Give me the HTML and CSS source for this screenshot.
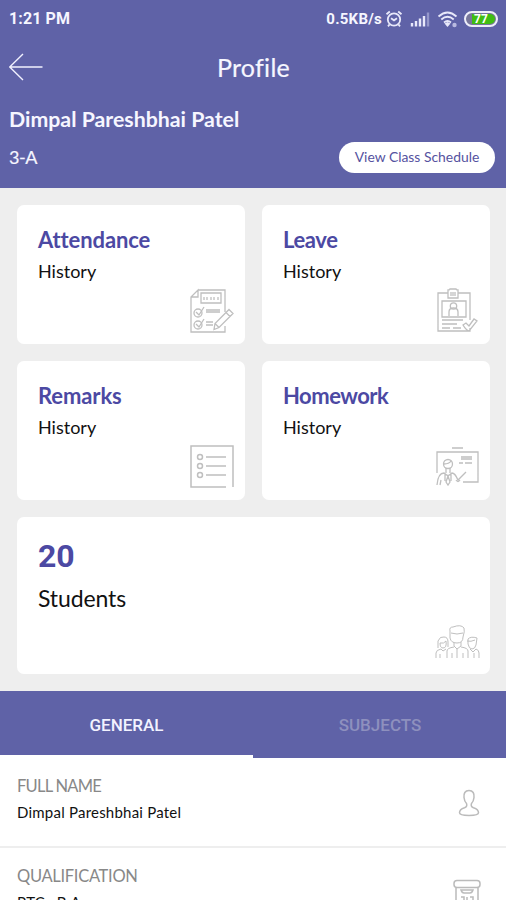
FILE: index.html
```html
<!DOCTYPE html>
<html lang="en">
<head>
<meta charset="utf-8">
<title>Profile</title>
<link rel="stylesheet" href="styles.css">
</head>
<body>
<div class="screen">
  <header class="header">
    <div class="status">
      <span class="time">1:21 PM</span>
      <span class="speed">0.5KB/s</span>
      <svg class="alarm" width="18" height="18" viewBox="0 0 18 18"><circle cx="9" cy="9.5" r="6.2"/><path d="M1.5 4.3 4.8 1.5M13.2 1.5l3.3 2.8M6 8.3l3 2 3-2M4.5 14.5 3 16.3M13.5 14.5l1.5 1.8"/></svg>
      <svg class="signal" width="20" height="15" viewBox="0 0 20 15"><path d="M2 11v3.5M6 9v5.5M10 6.5v8M14 4v10.5"/><path class="faint" d="M18 .5v14"/></svg>
      <svg class="wifi" width="22" height="17" viewBox="0 0 22 17"><path d="M1.5 5.5Q10.500-2.500 19.500 5.500M4.300 8.500Q10.500 3 16.700 8.500M7 11.500Q10.500 8.500 14 11.500"/><path class="solid" d="m7.500 12.500 3-1.500 3 1.500-3 3.500z"/><circle class="solid dot" cx="17.500" cy="14" r="2.200"/></svg>
      <span class="battery"><span class="charge">77</span></span>
    </div>
    <div class="titlebar">
      <svg class="back" width="36" height="30" viewBox="0 0 36 30"><path d="M33.500 15H.7M14 2 .7 15 14 28"/></svg>
      <h1 class="title">Profile</h1>
    </div>
    <div class="teacher">Dimpal Pareshbhai Patel</div>
    <div class="class-row"><span class="class-name">3-A</span><a class="schedule"><span>View Class Schedule</span></a></div>
  </header>

  <main class="cards">
    <section class="card">
      <h2 class="attendance">Attendance</h2><p>History</p>
      <svg class="icon" width="46" height="46" viewBox="0 0 46 46"><path d="M9 2h27v22M36 38v6H2V9l7-7v7H2M12 5h20v10H12zM15 9v3M18 9v3M22 9v3M25 9v3M29 9v3M17 22h14M17 24h14M17 34h7M17 37h7M40 21.500l4 4-14 14-5 2 1-6zM37 24.500l4 4M26 35.500l4 4M7 24l3 3 5-8M7 36l3 3 5-8"/><circle cx="9" cy="25" r="4"/><circle cx="9" cy="37" r="4"/></svg>
    </section>
    <section class="card">
      <h2 class="leave">Leave</h2><p>History</p>
      <svg class="icon" width="46" height="46" viewBox="0 0 46 46"><path d="M14 5H4v38h32v-3M24 5h12v27M14 2q2 0 2-1h6q0 1 2 1v8H14zM8 13h24v16H8zM15 28v-4q0-4 4.500-4t4.500 4v4M8 32h21M8 36h15M8 40h8M19 40h8M29 37l3-2 3 3 5-7 3 2-8 10q-3-1-6-6z"/><circle cx="19.500" cy="18" r="3.200"/><path d="M17 4v4M19 4v4M21 4v4"/></svg>
    </section>
    <section class="card">
      <h2 class="remarks">Remarks</h2><p>History</p>
      <svg class="icon list" width="46" height="46" viewBox="0 0 46 46"><path d="M37 43H2V2h42v41M17 13h20M17 22h20M17 31h20"/><circle cx="11" cy="13" r="2.500"/><circle cx="11" cy="22" r="2.500"/><circle cx="11" cy="31" r="2.500"/></svg>
    </section>
    <section class="card">
      <h2 class="homework">Homework</h2><p>History</p>
      <svg class="icon" width="46" height="46" viewBox="0 0 46 46"><path d="M18 4h11M3 29V8h41v30H29M27 13h11M27 15h11M25 19h4M31 19h7M3 41q1-12 7-12l4 3 4-3q3 0 6 7l8-8M7 36l-1 5M22 36q2 3 4 0M14 32l-2 6 2 3 2-3zM11 30v7M17 30v7"/><circle cx="14" cy="20" r="4.500"/><path d="M10 20q5 0 7-3M12 24v5M16 24v5"/></svg>
    </section>
    <section class="card wide">
      <h2>20</h2><p>Students</p>
      <svg class="icon" width="46" height="36" viewBox="0 0 46 36"><path d="M16 14V7q-1-4 3-4 8-3 11 1 1 3-1 9 0 6-6 6-6 0-7-5zM17 9q6 2 12 0M20 18v4l3 3 4-3v-4M13 34v-7q0-3 7-4M27 23q7 1 7 4v7M18 29v5M29 29v5M23 25v9M4 24v-7q2-5 6-4 4 0 4 5v5M6 19q4 1 6-2 1 7-3 7-3 0-3-5zM2 34v-5q0-3 5-4l2 2 3-2M6 30v4M34 20v-5q3-3 9-1l-1 7q-1 4-4 4t-4-5M33 17q4 1 8-1M36 25l3 3 3-3q3 1 3 4v5M40 29v5"/></svg>
    </section>
  </main>

  <nav class="tabs"><a class="tab active"><span>GENERAL</span></a><a class="tab"><span>SUBJECTS</span></a></nav>

  <div class="details">
    <div class="row">
      <div><div class="label">FULL NAME</div><div class="value">Dimpal Pareshbhai Patel</div></div>
      <svg class="person" width="22" height="28" viewBox="0 0 22 28"><path d="M11 1.500c-4 0-5.500 3-5 7 .3 3 1 4.500 2.500 6 .8 2 0 3.500-2 4.300-3 1-5 2.200-5 5 0 2.200 3 2.700 9.500 2.700s9.500-.5 9.500-2.700c0-2.800-2-4-5-5-2-.8-2.800-2.300-2-4.300C15 13 15.700 11.500 16 8.500c.5-4-1-7-5-7z"/></svg>
    </div>
    <div class="row">
      <div><div class="label qualification">QUALIFICATION</div><div class="value">PTC , B.A</div></div>
      <svg class="box" width="28" height="34" viewBox="0 0 28 34"><path d="M4 1.500h20q3 0 3 3v1q0 3-3 3H4q-3 0-3-3v-1q0-3 3-3zM3 8.500V32h22V8.500M8 11q1 3 3 3h6q2 0 3-3zM8 18h3v3M14 18v4M17 18h3v3M8 23h12"/></svg>
    </div>
  </div>
</div>
</body>
</html>
```

FILE: styles.css
```css
* { box-sizing: border-box; }
body { margin: 0; background: #fff; font-family: Lato, sans-serif; }
h1, h2, p { margin: 0; font-weight: 400; }
svg { display: block; fill: none; flex: none; }
.screen { width: 506px; height: 900px; overflow: hidden; }
.header { height: 188px; padding: 0 11px 0 9px; background: #5f62a7; color: #f6f6ff; }
.status { height: 38px; display: flex; align-items: center; }
.time, .speed { font: 700 16px/20px Roboto, sans-serif; }
.time { margin-right: auto; letter-spacing: .1px; }
.speed { font-size: 15px; letter-spacing: .25px; margin-right: 3px; }
.alarm, .wifi { stroke: #e8e8fa; stroke-width: 1.8; }
.alarm { margin-right: 7px; }
.signal { stroke: #e8e8fa; stroke-width: 2.4; margin-right: 7px; }
.signal .faint { stroke: #9597ca; }
.wifi { margin-right: 5px; }
.wifi .solid { fill: #e8e8fa; stroke: none; }
.wifi .dot { fill: #b9baE0; }
.battery { width: 34px; height: 16px; margin-right: -3px; border: 2px solid #eeeefa; border-radius: 8px; padding: 1px; background: #77769b; display: flex; justify-content: flex-end; }
.charge { width: 23px; height: 10px; border-radius: 0 5px 5px 0; background: #40bd13; color: #fff; font: 700 12px/10px Roboto, sans-serif; padding-left: 2px; }
.titlebar { height: 60px; display: grid; grid-template-columns: 36px 1fr 36px; align-items: center; }
.back { stroke: #f2f2ff; stroke-width: 1.4; margin-top: -2px; }
.title { text-align: center; font-size: 25px; line-height: 30px; letter-spacing: .3px; margin-top: -3px; padding-left: 3px; -webkit-text-stroke: .2px; }
.teacher { height: 44px; font-size: 21.3px; line-height: 43px; font-weight: 700; white-space: nowrap; }
.class-row { display: flex; align-items: center; justify-content: space-between; height: 31px; }
.class-name { font-size: 18px; line-height: 22px; letter-spacing: -.4px; margin-top: -2px; -webkit-text-stroke: .2px; }
.schedule { width: 156px; height: 31px; border-radius: 16px; background: #fff; color: #5552a0; text-align: center; font-size: 13.9px; line-height: 30px; white-space: nowrap; }
.cards { height: 503px; padding: 17px 16px 17px 17px; display: grid; grid-template-columns: 228px 228px; grid-template-rows: 139px 139px 157px; gap: 17px; background: #eee; }
.card { position: relative; border-radius: 7px; background: #fff; padding: 21px 21px 0; }
.card h2 { color: #4c49a3; font-size: 22px; line-height: 28px; font-weight: 700; letter-spacing: -.1px; }
.card .homework { letter-spacing: -.5px; }
.card .leave { letter-spacing: -.4px; }
.card p { color: #111; font-size: 18px; line-height: 24px; margin-top: 5px; }
.icon { position: absolute; right: 10px; bottom: 10px; stroke: #bfbfbf; stroke-width: 1.3; }
.list { stroke-width: 1.5; }
.wide { grid-column: 1 / 3; }
.wide .icon { bottom: 14px; stroke-width: 1; }
.wide h2 { font: 700 32px/36px Roboto, sans-serif; }
.wide p { font-size: 23px; line-height: 30px; margin-top: 9px; letter-spacing: -.1px; }
.tabs { height: 67px; display: grid; grid-template-columns: 1fr 1fr; background: #5f62a7; }
.tab { color: #8e90be; font: 500 17px/69px Roboto, sans-serif; text-align: center; height: 67px; padding-left: 1px; }
.active { color: #f2f2ff; border-bottom: 3px solid #fff; padding-left: 0; }
.row { height: 90px; padding: 17px 26px 0 17px; border-bottom: 2px solid #eee; display: flex; justify-content: space-between; }
.label { color: #888; font-size: 16.5px; line-height: 22px; letter-spacing: -.75px; }
.qualification { letter-spacing: -.3px; }
.value { color: #111; font-size: 15px; line-height: 22px; letter-spacing: .22px; margin-top: 4px; }
.person { margin-top: 14px; stroke: #bbb; stroke-width: 1.5; }
.box { margin-top: 14px; margin-right: -1px; stroke: #bbb; stroke-width: 1.5; }
```
